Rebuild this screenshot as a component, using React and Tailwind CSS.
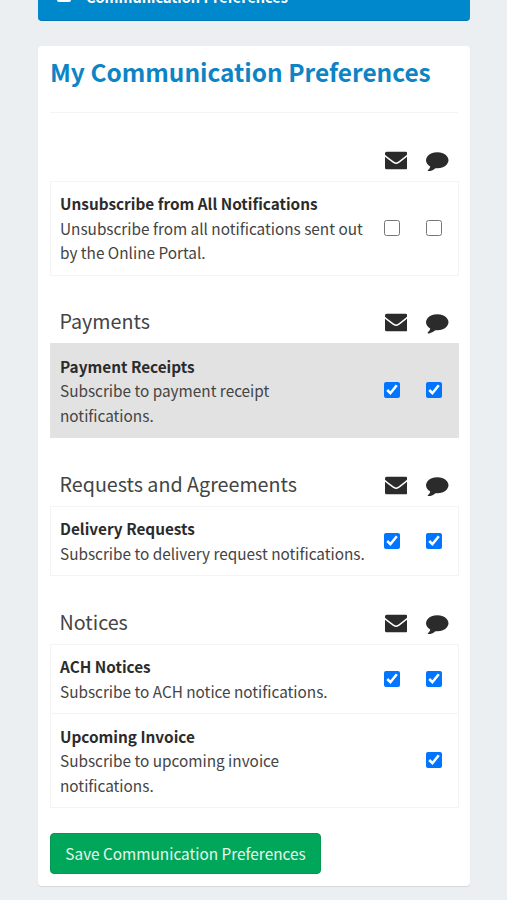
import React from "react";

const sections = [
  {
    title: "",
    rows: [
      {
        name: "Unsubscribe from All Notifications",
        lines: ["Unsubscribe from all notifications sent out", "by the Online Portal."],
        email: false,
        sms: false,
      },
    ],
  },
  {
    title: "Payments",
    rows: [
      {
        name: "Payment Receipts",
        lines: ["Subscribe to payment receipt", "notifications."],
        email: true,
        sms: true,
        active: true,
      },
    ],
  },
  {
    title: "Requests and Agreements",
    rows: [
      {
        name: "Delivery Requests",
        lines: ["Subscribe to delivery request notifications."],
        email: true,
        sms: true,
      },
    ],
  },
  {
    title: "Notices",
    rows: [
      {
        name: "ACH Notices",
        lines: ["Subscribe to ACH notice notifications."],
        email: true,
        sms: true,
      },
      {
        name: "Upcoming Invoice",
        lines: ["Subscribe to upcoming invoice", "notifications."],
        sms: true,
      },
    ],
  },
];

const EnvelopeIcon = () => (
  <svg viewBox="0 0 22.5 22.5" className="h-[22.5px] w-[22.5px]">
    <rect x="0" y="2.700" width="22.200" height="17.600" rx="1.600" fill="currentColor" />
    <path
      d="M-0.500 6.200C2.500 8.900 6 11.300 8.800 13.400Q11.100 15.100 13.400 13.400C16.200 11.300 19.700 8.900 22.700 6.200"
      fill="none"
      stroke="#fff"
      strokeWidth="1.500"
    />
  </svg>
);

const CommentIcon = () => (
  <svg viewBox="0 0 1792 1792" fill="currentColor" className="h-[22.5px] w-[22.5px]">
    <path d="M1792 896q0 174-120 321.500t-326 233-450 85.500q-70 0-145-8-198 175-460 242-49 14-114 22h-5q-15 0-27-10.500t-16-27.500v-1q-3-4-.5-12t2-10 4.500-9.500l6-9 7-8.500 8-9q7-8 31-34.500t34.500-38 31-39.500 32.500-51 27-59 26-76q-157-89-247.500-220T0 896q0-174 120-321.500t326-233T896 256t450 85.500 326 233T1792 896z" />
  </svg>
);

const Check = ({ value, label }) => (
  <div className="flex w-4 items-center">
    {value !== undefined && (
      <input type="checkbox" defaultChecked={value} aria-label={label} className="h-4 w-4" />
    )}
  </div>
);

const Row = ({ row }) => (
  <div
    className={
      "flex border-x border-b px-[9px] pt-[9.2px] pb-[10px] " +
      (row.active ? "border-[#e2e2e2] bg-[#e2e2e2]" : "border-[#f4f4f4]")
    }
  >
    <div className="min-w-0 flex-1 text-[15.33px] leading-[24.5px] whitespace-nowrap">
      <div className="font-bold text-[#2b2b2b]">{row.name}</div>
      {row.lines.map((line) => (
        <div key={line} className="text-[#444]">{line}</div>
      ))}
    </div>
    <div className="flex w-[65px] shrink-0 gap-[25.5px]">
      <Check value={row.email} label={row.name + " email"} />
      <Check value={row.sms} label={row.name + " text"} />
    </div>
  </div>
);

const Section = ({ section }) => (
  <section>
    <div className="flex h-[67.9px] items-end px-[9.5px] pb-[9px]">
      <h3 className="flex-1 text-[19.7px] leading-[26px] text-[#444]">{section.title}</h3>
      <div className="mb-[0.8px] flex w-[65px] gap-[19px] text-[#2b2b2b]">
        <EnvelopeIcon />
        <CommentIcon />
      </div>
    </div>
    <div className={section.rows[0].active ? "border-t border-[#e2e2e2]" : "border-t border-[#f4f4f4]"}>
      {section.rows.map((row) => (
        <Row key={row.name} row={row} />
      ))}
    </div>
  </section>
);

export default function App() {
  return (
    <div className="h-[900px] overflow-hidden bg-[#ebeff2] px-[38px] font-['Noto_Sans_CJK_SC',sans-serif]">
      {/* Section menu, scrolled mostly out of view */}
      <div className="-mt-6 flex h-[45px] w-[432px] items-start gap-[15px] rounded-[4px] border-b border-[#0073b3] bg-[#0088cc] pt-[9px] pl-[19px] text-white">
        <span className="mt-[4px] h-[13px] w-[14px] rounded-[2px] bg-white" />
        <span className="text-[14.5px] leading-[24px] font-bold">Communication Preferences</span>
      </div>

      <div className="mt-[25px] h-[840px] w-[432px] rounded-[4px] bg-white px-3 pt-3 shadow-[0_1px_1px_rgba(0,0,0,0.1)]">
        <h1 className="h-[55px] border-b border-[#f4f4f4] text-[24.45px] leading-[27px] font-bold whitespace-nowrap text-[#0d84c4]">
          My Communication Preferences
        </h1>
        <div className="w-[409px]">
          {sections.map((section) => (
            <Section key={section.title} section={section} />
          ))}
        </div>
        <button className="mt-[25px] h-[41px] w-[271px] rounded-[4px] border border-[#089750] bg-[#00a65a] text-[15.35px] whitespace-nowrap text-[#e4f7ec]">
          Save Communication Preferences
        </button>
      </div>
    </div>
  );
}
